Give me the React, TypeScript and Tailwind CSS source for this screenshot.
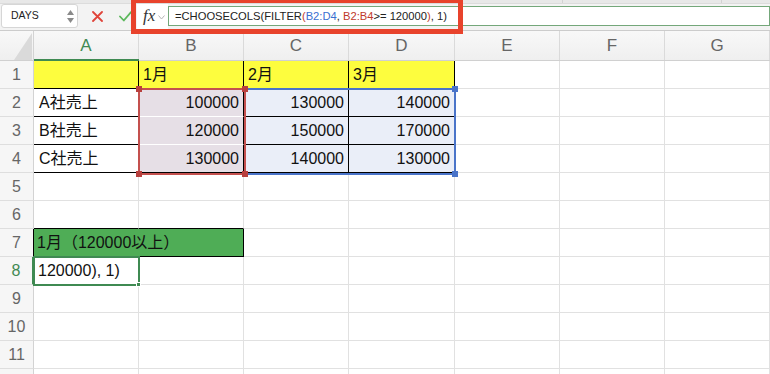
import React from "react";

const font = { fontFamily: '"Liberation Sans","Noto Sans CJK JP",sans-serif' };

function RowHead({ n, active, black }: { n: number | string; active?: boolean; black?: boolean }) {
  return (
    <div
      className={
        "w-[34px] h-[28px] shrink-0 flex items-center justify-center bg-[#f6f6f6] border-b border-[#dedede] text-[16px] " +
        (black ? "border-r border-r-black " : active ? "border-r-2 border-r-[#3f8a52] " : "border-r border-r-[#d3d3d3] ") +
        (active ? "text-[#3f8a52]" : "text-[#666666]")
      }
    >
      {n}
    </div>
  );
}

function C({ w, cls, children }: { w: string; cls?: string; children?: React.ReactNode }) {
  return (
    <div className={w + " h-[28px] shrink-0 flex items-center text-[16px] text-[#111] whitespace-nowrap " + (cls ?? "border-r border-b border-[#e1e1e1]")}>
      {children}
    </div>
  );
}

function EmptyRest() {
  return (
    <>
      <C w="w-[105px]" />
      <C w="w-[105px]" />
      <C w="w-[105px]" />
    </>
  );
}

export default function App() {
  const cols = [
    { l: "A", w: "w-[105px]" },
    { l: "B", w: "w-[105px]" },
    { l: "C", w: "w-[105px]" },
    { l: "D", w: "w-[106px]" },
    { l: "E", w: "w-[105px]" },
    { l: "F", w: "w-[105px]" },
    { l: "G", w: "w-[105px]" },
  ];
  const dataRows = [
    ["A社売上", "100000", "130000", "140000"],
    ["B社売上", "120000", "150000", "170000"],
    ["C社売上", "130000", "140000", "130000"],
  ];
  return (
    <div className="w-[770px] h-[374px] overflow-hidden bg-white relative" style={font}>
      {/* Toolbar */}
      <div className="h-[31px] bg-[#f3f3f3] border-b border-[#cccccc] flex flex-col">
        <div className="h-[4px] bg-[#e8e8e8] border-b border-[#dcdcdc] flex">
          <div className="w-[563px] border-r border-[#d2d2d2]" />
          <div className="w-[159px] border-r border-[#d2d2d2]" />
          <div className="flex-1" />
        </div>
        <div className="h-[24px] flex items-center">
          <div className="ml-[1px] w-[77px] h-[24px] bg-white border border-[#d6d6d6] rounded-[3px] flex items-center pl-[9px] pr-[3px]">
            <span className="text-[10.5px] text-[#222] flex-1">DAYS</span>
            <div className="flex flex-col items-center gap-[3px]">
              <svg width="7" height="5" viewBox="0 0 7 5"><path d="M0 5 L3.5 0 L7 5 Z" fill="#8a8a8a" /></svg>
              <svg width="7" height="5" viewBox="0 0 7 5"><path d="M0 0 L3.5 5 L7 0 Z" fill="#8a8a8a" /></svg>
            </div>
          </div>
          <svg className="ml-[14px]" width="11" height="11" viewBox="0 0 11 11">
            <path d="M1 1 L10 10 M10 1 L1 10" stroke="#e0443a" strokeWidth="1.8" strokeLinecap="round" />
          </svg>
          <svg className="ml-[16px]" width="13" height="11" viewBox="0 0 13 11">
            <path d="M1 5.5 L4.8 9.5 L12 1.2" stroke="#5cb85c" strokeWidth="1.8" fill="none" strokeLinecap="round" strokeLinejoin="round" />
          </svg>
          <div className="ml-[5px] w-[31px] h-[25px] bg-white flex items-center pl-[6px]">
            <span className="text-[17px] italic text-[#333]" style={{ fontFamily: '"Liberation Serif",serif' }}>fx</span>
            <svg className="ml-[3px] mt-[3px]" width="7" height="5" viewBox="0 0 7 5">
              <path d="M0.5 0.5 L3.5 4 L6.5 0.5" stroke="#b5b5b5" strokeWidth="1" fill="none" />
            </svg>
          </div>
          <div className="flex-1 h-[20px] bg-white border border-[#74a77a] flex items-center pl-[6px] text-[11.2px] text-[#222] whitespace-nowrap">
            =CHOOSECOLS(FILTER<span className="text-[#c0392b]">(</span>
            <span className="text-[#3a6fd1]">B2:D4</span>,&nbsp;
            <span className="text-[#c0392b]">B2:B4</span>&gt;= 120000<span className="text-[#c0392b]">)</span>, 1)
          </div>
        </div>
      </div>

      {/* Column headers */}
      <div className="flex h-[30px] bg-gradient-to-b from-[#f8f8f8] to-[#efefef] border-b border-[#d0d0d0]">
        <div className="w-[34px] shrink-0 border-r border-[#d3d3d3] flex items-end justify-end pr-[1px]">
          <svg width="18" height="27" viewBox="0 0 18 27"><path d="M0 27 L18 0 L18 27 Z" fill="#dadada" /></svg>
        </div>
        {cols.map((c) => (
          <div
            key={c.l}
            className={
              c.w +
              " shrink-0 border-r border-[#dadada] flex items-center justify-center text-[17px] " +
              (c.l === "A" ? "text-[#3f8a52]" : "text-[#666666]")
            }
          >
            {c.l}
          </div>
        ))}
      </div>

      {/* Grid */}
      <div className="relative">
        <div className="absolute left-[34px] top-[-2px] w-[105px] h-[2px] bg-[#3f8a52]" />
        {/* Row 1 */}
        <div className="flex">
          <RowHead n={1} />
          <C w="w-[105px]" cls="bg-[#fdfd3e] border-r border-b border-black" />
          <C w="w-[105px]" cls="bg-[#fdfd3e] border-r border-b border-black pl-[4px]">1月</C>
          <C w="w-[105px]" cls="bg-[#fdfd3e] border-r border-b border-black pl-[4px]">2月</C>
          <C w="w-[106px]" cls="bg-[#fdfd3e] border-r border-b border-black pl-[4px]">3月</C>
          <EmptyRest />
        </div>
        {dataRows.map((r, i) => (
          <div className="flex" key={i}>
            <RowHead n={i + 2} />
            <C w="w-[105px]" cls="border-r border-b border-black pl-[5px]">{r[0]}</C>
            <C
              w="w-[105px]"
              cls={"bg-[#e6dfe6] border-r border-b justify-end pr-[4px] " + (i < 2 ? "border-b-white border-r-black" : "border-black")}
            >
              {r[1]}
            </C>
            <C w="w-[105px]" cls="bg-[#eaeef8] border-r border-b border-black justify-end pr-[4px]">{r[2]}</C>
            <C w="w-[106px]" cls="bg-[#eaeef8] border-r border-b border-black justify-end pr-[4px]">{r[3]}</C>
            <EmptyRest />
          </div>
        ))}
        {/* Row 5 */}
        <div className="flex">
          <RowHead n={5} />
          <C w="w-[105px]" />
          <C w="w-[105px]" />
          <C w="w-[105px]" />
          <C w="w-[106px]" />
          <EmptyRest />
        </div>
        {/* Row 6 */}
        <div className="flex">
          <RowHead n={6} />
          <C w="w-[105px]" cls="border-r border-r-[#e1e1e1] border-b border-b-black" />
          <C w="w-[105px]" cls="border-r border-r-[#e1e1e1] border-b border-b-black" />
          <C w="w-[105px]" />
          <C w="w-[106px]" />
          <EmptyRest />
        </div>
        {/* Row 7 */}
        <div className="flex">
          <RowHead n={7} black />
          <C w="w-[210px]" cls="bg-[#4fad56] border-r border-b border-black pl-[3px]">1月（120000以上）</C>
          <C w="w-[105px]" />
          <C w="w-[106px]" />
          <EmptyRest />
        </div>
        {/* Row 8 */}
        <div className="flex">
          <RowHead n={8} active />
          <C w="w-[105px]" cls="border-r border-b border-[#e1e1e1] pl-[4px]">120000), 1)</C>
          <C w="w-[105px]" />
          <C w="w-[105px]" />
          <C w="w-[106px]" />
          <EmptyRest />
        </div>
        {[9, 10, 11, 0].map((n) => (
          <div className="flex" key={n}>
            <RowHead n={n === 0 ? "" : n} />
            <C w="w-[105px]" />
            <C w="w-[105px]" />
            <C w="w-[105px]" />
            <C w="w-[106px]" />
            <EmptyRest />
          </div>
        ))}

        {/* Blue reference range C2:D4 */}
        <div className="absolute left-[244px] top-[27px] w-[212px] h-[87px] border-2 border-[#4a74c9]" />
        <div className="absolute left-[452px] top-[25px] w-[6px] h-[6px] bg-[#4a74c9]" />
        <div className="absolute left-[452px] top-[110px] w-[6px] h-[6px] bg-[#4a74c9]" />
        {/* Red reference range B2:B4 */}
        <div className="absolute left-[138px] top-[27px] w-[108px] h-[87px] border-2 border-[#c4504e]" />
        <div className="absolute left-[136px] top-[25px] w-[6px] h-[6px] bg-[#b8403e]" />
        <div className="absolute left-[242px] top-[25px] w-[6px] h-[6px] bg-[#b8403e]" />
        <div className="absolute left-[136px] top-[110px] w-[6px] h-[6px] bg-[#b8403e]" />
        <div className="absolute left-[242px] top-[110px] w-[6px] h-[6px] bg-[#b8403e]" />
        {/* Active cell A8 */}
        <div className="absolute left-[33px] top-[195px] w-[107px] h-[30px] border-2 border-[#3f8a52]" />
        <div className="absolute left-[136px] top-[221px] w-[5px] h-[5px] bg-[#3f8a52] border border-white" />
      </div>

      {/* Red annotation frame */}
      <div className="absolute left-[131px] top-[-2px] w-[332px] h-[36px] border-[5px] border-[#e8432c]" />
    </div>
  );
}
